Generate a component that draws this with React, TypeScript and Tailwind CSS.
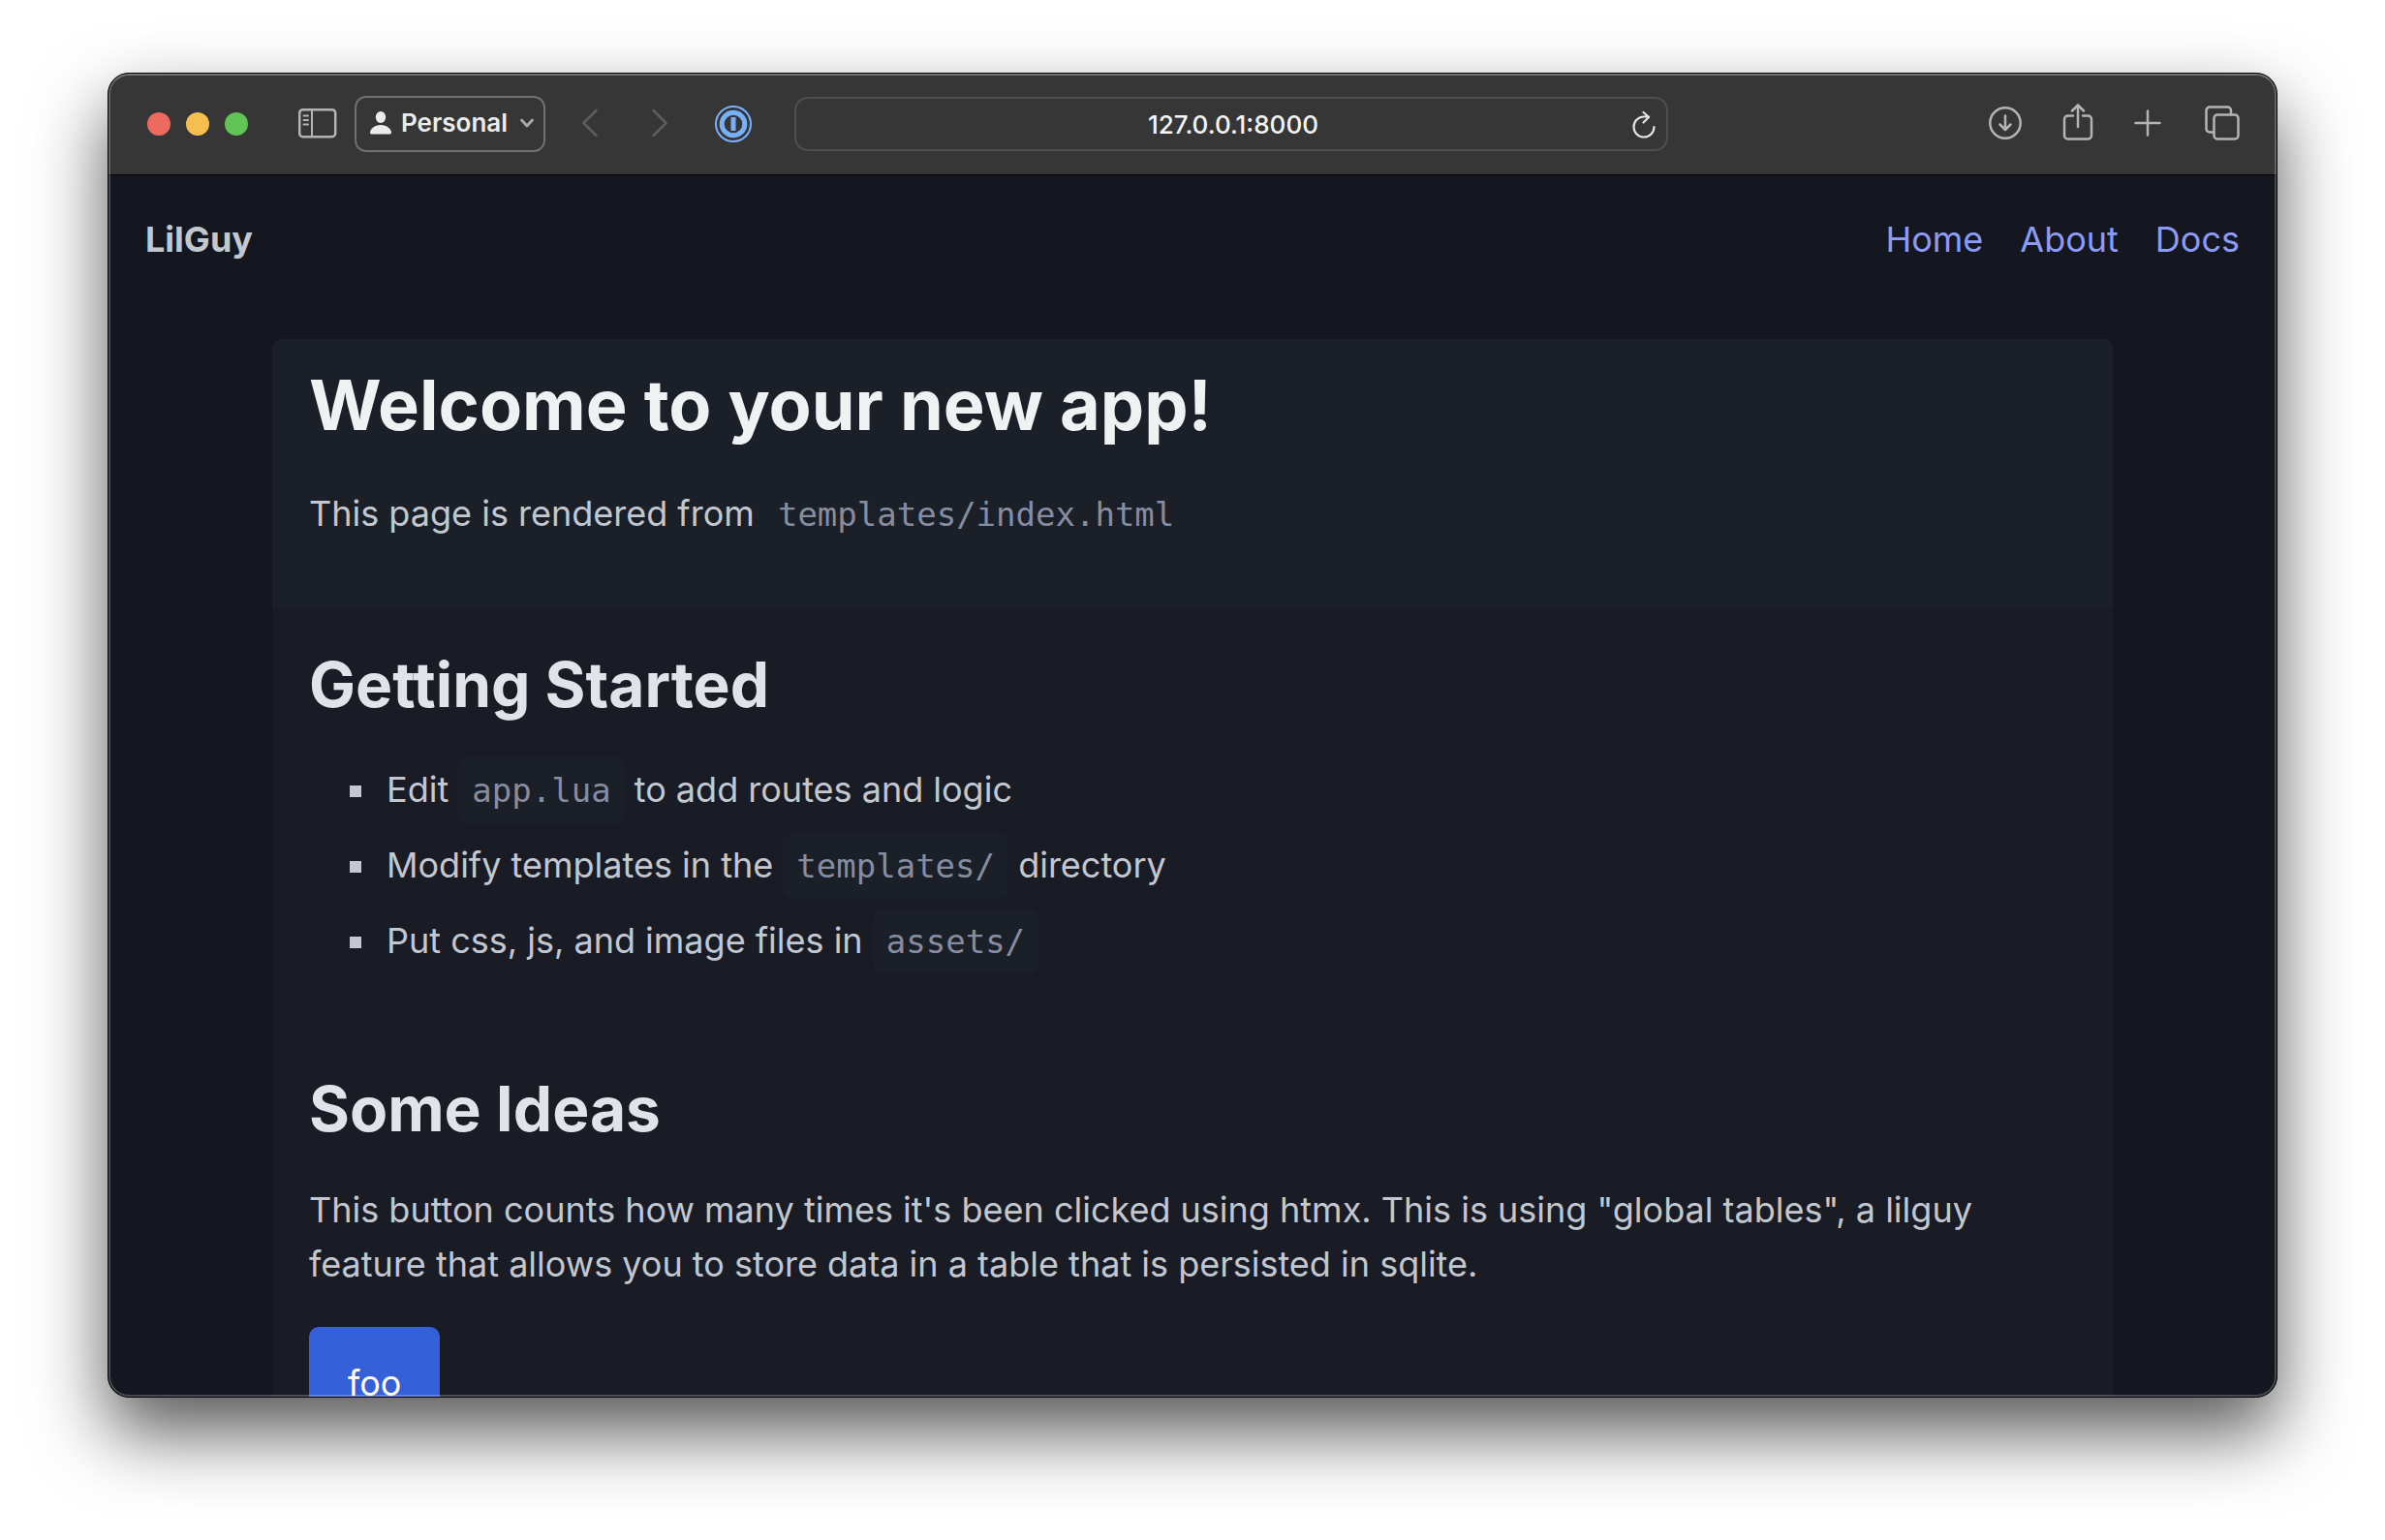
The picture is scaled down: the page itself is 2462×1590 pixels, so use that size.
import type { ReactNode, SVGProps } from "react";

function Icon({ children, ...rest }: { children: ReactNode } & SVGProps<SVGSVGElement>) {
  return (
    <svg fill="none" stroke="currentColor" strokeWidth="2.5" strokeLinecap="round" strokeLinejoin="round" aria-hidden="true" {...rest}>
      {children}
    </svg>
  );
}

function Code({ children }: { children: ReactNode }) {
  return (
    <code className="rounded-[10px] bg-[#1b1f28] p-[14px] font-['DejaVu_Sans_Mono',monospace] text-[34px] text-[#868da0]">
      {children}
    </code>
  );
}

function Item({ children }: { children: ReactNode }) {
  return (
    <li className="before:mr-[26px] before:mb-0.5 before:-ml-[38px] before:inline-block before:size-3 before:bg-[#c2c7d0] before:align-middle">
      {children}
    </li>
  );
}

function Toolbar() {
  return (
    <header className="flex h-[105px] shrink-0 items-center border-b border-black bg-[#363636] text-[#b4b4b4]">
      <div className="flex w-[708px] shrink-0 items-center pl-10">
        <div className="flex gap-4">
          <button aria-label="Close" className="size-6 rounded-full bg-[#ed6a5f]" />
          <button aria-label="Minimize" className="size-6 rounded-full bg-[#f5bf4f]" />
          <button aria-label="Zoom" className="size-6 rounded-full bg-[#61c555]" />
        </div>
        <button aria-label="Show sidebar" className="ml-[52px] pb-0.5">
          <Icon width="40" height="32" viewBox="0 0 40 32" strokeWidth="2">
            <rect x="1.200" y="2.200" width="37" height="28" rx="3.500" strokeWidth="2.500" />
            <path d="M14 2v28M5.500 8.500h4.500M5.500 13h4.500M5.500 17.500h4.500" />
          </Icon>
        </button>
        <button className="ml-[18px] flex h-[58px] w-[197px] items-center rounded-xl border-2 border-[#707070] pb-0.5 pl-[14px] text-[#ececec]">
          <svg width="22" height="24" viewBox="0 0 22 24" fill="currentColor" aria-hidden="true">
            <ellipse cx="11" cy="6" rx="5.200" ry="6" />
            <path d="M2 23.500C.7 23.500 0 22.800 0 21.700 0 18.500 4.500 14 11 14s11 4.500 11 7.700c0 1.100-.7 1.800-2 1.800z" />
          </svg>
          <span className="ml-[10px] text-[26px] leading-8 font-semibold">Personal</span>
          <Icon width="16" height="12" viewBox="0 0 16 12" strokeWidth="2.800" className="ml-3 text-[#a8a8a8]">
            <path d="M2.500 3l5.500 6 5.500-6" />
          </Icon>
        </button>
        <button aria-label="Back" className="ml-[37px] pb-0.5 text-[#5d5d5d]">
          <Icon width="18" height="30" viewBox="0 0 18 30">
            <path d="M15.500 2L2.500 15l13 13" />
          </Icon>
        </button>
        <button aria-label="Forward" className="ml-[54px] pb-0.5 text-[#5d5d5d]">
          <Icon width="18" height="30" viewBox="0 0 18 30">
            <path d="M2.500 2l13 13-13 13" />
          </Icon>
        </button>
        <button aria-label="Password manager" className="ml-12 text-[#78b0fb]">
          <Icon width="38" height="38" viewBox="0 0 38 38" strokeLinecap="butt">
            <circle cx="19" cy="19" r="18" strokeWidth="2" />
            <circle cx="19" cy="19" r="11.800" strokeWidth="5" />
            <path d="M19 12v14" strokeWidth="5" />
          </Icon>
        </button>
      </div>
      <div className="relative flex-1">
        <input
          aria-label="Address"
          defaultValue="127.0.0.1:8000"
          className="h-14 w-full rounded-[14px] border-2 border-[#4f4f4f] bg-transparent pl-1 text-center text-[26px] font-medium text-[#f6f6f6]"
        />
        <button aria-label="Reload" className="absolute top-[14px] right-[13px] text-[#e4e4e4]">
          <Icon width="24" height="30" viewBox="0 0 24 30" strokeWidth="2.200">
            <path d="M22.500 17A10.500 10.500 0 1 1 12 6.500h5M11.500 2L17 7l-5.500 5.500" />
          </Icon>
        </button>
      </div>
      <div className="flex w-[628px] shrink-0 items-center justify-end pr-[38px] pb-0.5">
        <button aria-label="Downloads">
          <Icon width="36" height="36" viewBox="0 0 36 36">
            <circle cx="18" cy="18" r="15.700" />
            <path d="M18 10.500v14.500M12.500 19.500L18 25l5.500-5.500" />
          </Icon>
        </button>
        <button aria-label="Share" className="ml-[41px]">
          <Icon width="32" height="40" viewBox="0 0 32 40">
            <path d="M11 12.500H5.500A3.500 3.500 0 0 0 2 16v17A3.500 3.500 0 0 0 5.500 36.500h21a3.500 3.500 0 0 0 3.500-3.500V16a3.500 3.500 0 0 0-3.500-3.500H21M16 24V1.500M10 7.500l6-6 6 6" />
          </Icon>
        </button>
        <button aria-label="New tab" className="ml-[42px]">
          <Icon width="28" height="28" viewBox="0 0 28 28">
            <path d="M14 1.500v25M1.500 14h25" />
          </Icon>
        </button>
        <button aria-label="Tab overview" className="ml-[45px]">
          <Icon width="36" height="36" viewBox="0 0 36 36">
            <path d="M9 27.500H5A3.500 3.500 0 0 1 1.500 24V5A3.500 3.500 0 0 1 5 1.500h18.500A3.500 3.500 0 0 1 27 5v4" />
            <rect x="9.500" y="9.500" width="25" height="25" rx="3.500" />
          </Icon>
        </button>
      </div>
    </header>
  );
}

export default function App() {
  return (
    <div className="flex h-screen flex-col bg-white px-[111px] pt-[75px] pb-[147px] font-[Inter,sans-serif]">
      <div className="relative flex min-h-0 flex-1 flex-col overflow-hidden rounded-[22px] border border-black bg-[#14171f] shadow-[0_36px_76px_rgba(0,0,0,0.66)]">
        <Toolbar />
        <div className="min-h-0 flex-1 overflow-hidden text-[36px] leading-[57px] text-[#c2c7d0]">
          <nav className="flex justify-between px-[38px] pt-[38px] pb-9">
            <strong className="font-bold">LilGuy</strong>
            <ul className="flex gap-[38px] text-[#8c9bf8]">
              <li><a href="#home">Home</a></li>
              <li><a href="#about">About</a></li>
              <li><a href="#docs">Docs</a></li>
            </ul>
          </nav>
          <main className="mx-[169px] mt-[38px] rounded-[10px] bg-[#1a1c25]">
            <section className="rounded-t-[10px] bg-[#1b1f28] px-[38px] pt-[25px] pb-[69px]">
              <h1 className="text-[72px] leading-[86px] font-bold text-[#f0f1f3]">Welcome to your new app!</h1>
              <p className="mt-[41px]">
                This page is rendered from <Code>templates/index.html</Code>
              </p>
            </section>
            <section className="px-[38px] pt-10">
              <h2 className="text-[64px] leading-[76px] font-bold text-[#e0e3e7]">Getting Started</h2>
              <ul className="mt-[42px] flex flex-col gap-5 pl-20">
                <Item>Edit <Code>app.lua</Code> to add routes and logic</Item>
                <Item>Modify templates in the <Code>templates/</Code> directory</Item>
                <Item>Put css, js, and image files in <Code>assets/</Code></Item>
              </ul>
              <h2 className="mt-[106px] text-[64px] leading-[76px] font-bold text-[#e0e3e7]">Some Ideas</h2>
              <p className="mt-[38px] leading-[56px]">
                This button counts how many times it's been clicked using htmx. This is using "global tables", a lilguy
                feature that allows you to store data in a table that is persisted in sqlite.
              </p>
              <button className="mt-[37px] mb-10 rounded-[10px] bg-[#3560d8] px-10 py-[30px] text-white">foo</button>
            </section>
          </main>
        </div>
        <div className="pointer-events-none absolute inset-0 rounded-[21px] border-2 border-white/22 border-t-white/30" />
      </div>
    </div>
  );
}
